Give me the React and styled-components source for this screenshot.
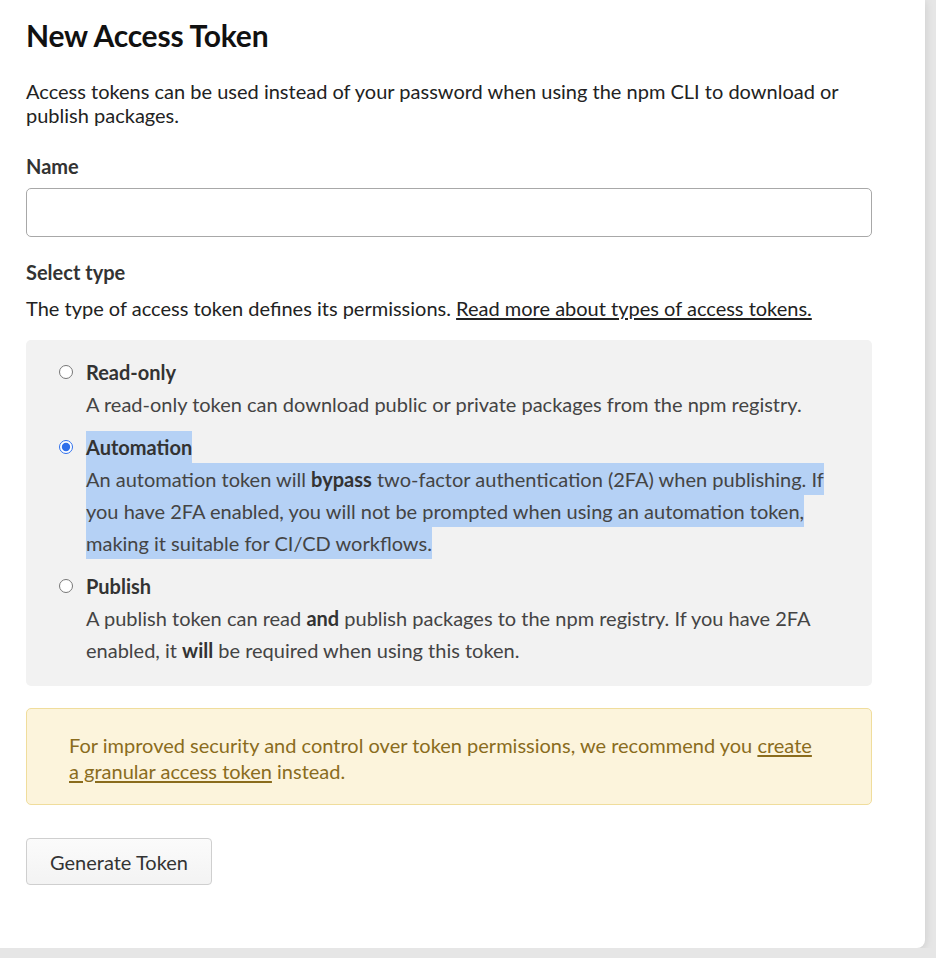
import React, { useState } from "react";
import styled, { createGlobalStyle } from "styled-components";

const GlobalStyle = createGlobalStyle`
	html, body {
		margin: 0;
		padding: 0;
		background: #e6e6e6;
	}
	body {
		font-family: Lato, "Noto Sans", sans-serif;
		color: #222;
	}
`;

const Card = styled.div`
	width: 925px;
	box-sizing: border-box;
	background: #ffffff;
	border-bottom-right-radius: 8px;
	box-shadow: 0 2px 10px rgba(0, 0, 0, 0.12);
	padding: 17px 0 63px 26px;
`;

const Content = styled.div`
	width: 846px;
	display: flex;
	flex-direction: column;
`;

const Title = styled.h1`
	margin: 0;
	font-size: 30px;
	line-height: 36px;
	font-weight: 700;
	color: #111;
	letter-spacing: -0.2px;
`;

const Paragraph = styled.p`
	margin: ${(p) => p.$top || 0}px 0 0;
	font-size: 20px;
	line-height: 24px;
	color: #222;
`;

const Label = styled.div`
	margin-top: ${(p) => p.$top || 0}px;
	font-size: 20px;
	line-height: 24px;
	font-weight: 700;
	color: #333;
`;

const TextInput = styled.input`
	margin-top: 10px;
	height: 49px;
	box-sizing: border-box;
	width: 100%;
	border: 1px solid #a8a8a8;
	border-radius: 5px;
	font-size: 20px;
	padding: 0 12px;
	font-family: inherit;
	outline: none;
`;

const Link = styled.a`
	color: inherit;
	text-decoration: underline;
	text-underline-offset: 2px;
	cursor: pointer;
`;

const TypeBox = styled.div`
	margin-top: 20px;
	background: #f2f2f2;
	border-radius: 5px;
	padding: 16px 30px 20px 33px;
	display: flex;
	flex-direction: column;
	gap: 11px;
`;

const Option = styled.label`
	display: grid;
	grid-template-columns: 14px 1fr;
	column-gap: 13px;
	align-items: start;
	cursor: pointer;
`;

const Radio = styled.input.attrs({ type: "radio" })`
	margin: 9px 0 0;
	width: 14px;
	height: 14px;
	accent-color: #2f6fea;
`;

const OptionTitle = styled.div`
	font-size: 20px;
	line-height: 32px;
	font-weight: 700;
	color: #333;
`;

const OptionText = styled.div`
	font-size: 20px;
	line-height: 32px;
	color: #444;

	b {
		color: #333;
	}
`;

// stands in for the text selection seen over the chosen option
const Highlight = styled.span`
	${(p) =>
		p.$on &&
		`
		background: #b5d1f5;
		padding: 4px 0;
		-webkit-box-decoration-break: clone;
		box-decoration-break: clone;
	`}
`;

const Notice = styled.div`
	margin-top: 22px;
	background: #fcf4dc;
	border: 1px solid #f0dd9c;
	border-radius: 5px;
	padding: 23px 50px 20px 42px;
	font-size: 20px;
	line-height: 26px;
	color: #8a6c1d;
`;

const ButtonRow = styled.div`
	margin-top: 33px;
	display: flex;
`;

const Button = styled.button`
	height: 47px;
	width: 186px;
	padding: 0;
	font-family: inherit;
	font-size: 20px;
	color: #333;
	background: linear-gradient(#fbfbfb, #f3f3f3);
	border: 1px solid #cfcfcf;
	border-radius: 4px;
	cursor: pointer;
`;

const options = [
	{
		id: "read-only",
		title: "Read-only",
		text: <>A read-only token can download public or private packages from the npm registry.</>,
	},
	{
		id: "automation",
		title: "Automation",
		text: (
			<>
				An automation token will <b>bypass</b> two-factor authentication (2FA) when publishing. If
				you have 2FA enabled, you will not be prompted when using an automation token, making it
				suitable for CI/CD workflows.
			</>
		),
	},
	{
		id: "publish",
		title: "Publish",
		text: (
			<>
				A publish token can read <b>and</b> publish packages to the npm registry. If you have 2FA
				enabled, it <b>will</b> be required when using this token.
			</>
		),
	},
];

export default function App() {
	const [type, setType] = useState("automation");
	const [name, setName] = useState("");

	return (
		<>
			<GlobalStyle />
			<Card>
				<Content>
					<Title>New Access Token</Title>
					<Paragraph $top={26}>
						Access tokens can be used instead of your password when using the npm CLI to download or
						publish packages.
					</Paragraph>

					<Label $top={27}>Name</Label>
					<TextInput value={name} onChange={(e) => setName(e.target.value)} />

					<Label $top={23}>Select type</Label>
					<Paragraph $top={12}>
						The type of access token defines its permissions.{" "}
						<Link>Read more about types of access tokens.</Link>
					</Paragraph>

					<TypeBox>
						{options.map((opt) => {
							const selected = type === opt.id;
							return (
								<Option key={opt.id}>
									<Radio
										name="token-type"
										checked={selected}
										onChange={() => setType(opt.id)}
									/>
									<div>
										<OptionTitle>
											<Highlight $on={selected}>{opt.title}</Highlight>
										</OptionTitle>
										<OptionText>
											<Highlight $on={selected}>{opt.text}</Highlight>
										</OptionText>
									</div>
								</Option>
							);
						})}
					</TypeBox>

					<Notice>
						For improved security and control over token permissions, we recommend you{" "}
						<Link>create a granular access token</Link> instead.
					</Notice>

					<ButtonRow>
						<Button>Generate Token</Button>
					</ButtonRow>
				</Content>
			</Card>
		</>
	);
}
